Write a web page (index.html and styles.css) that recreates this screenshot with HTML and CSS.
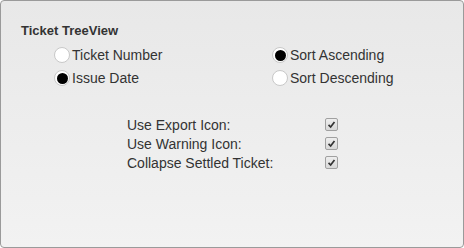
FILE: index.html
```html
<!DOCTYPE html>
<html lang="en">
<head>
  <meta charset="UTF-8" />
  <title>Ticket TreeView</title>
  <link rel="stylesheet" href="styles.css">
</head>
<body>
  <div class="panel">
    <h2 class="panel-title">Ticket TreeView</h2>

    <div class="radio-grid">
      <label class="radio"><span class="dot"></span>Ticket Number</label>
      <label class="radio"><span class="dot on"></span>Sort Ascending</label>
      <label class="radio"><span class="dot on"></span>Issue Date</label>
      <label class="radio"><span class="dot"></span>Sort Descending</label>
    </div>

    <div class="options">
      <div class="option">
        <span class="option-label">Use Export Icon:</span>
        <span class="check"><svg viewBox="0 0 13 13"><path d="M3 7 L5.5 9.5 L10 3.5" /></svg></span>
      </div>
      <div class="option">
        <span class="option-label">Use Warning Icon:</span>
        <span class="check"><svg viewBox="0 0 13 13"><path d="M3 7 L5.5 9.5 L10 3.5" /></svg></span>
      </div>
      <div class="option">
        <span class="option-label">Collapse Settled Ticket:</span>
        <span class="check"><svg viewBox="0 0 13 13"><path d="M3 7 L5.5 9.5 L10 3.5" /></svg></span>
      </div>
    </div>
  </div>
</body>
</html>
```

FILE: styles.css
```css
html, body {
  margin: 0;
  height: 100%;
}

body {
  font-family: "Liberation Sans", Arial, sans-serif;
  color: #333;
}

.panel {
  box-sizing: border-box;
  height: 248px;
  border: 1px solid #9a9a9a;
  border-radius: 4px;
  background: linear-gradient(#e8e8e8, #f2f2f2);
  padding: 22px 20px 0 20px;
}

.panel-title {
  margin: 0;
  font-size: 13px;
  font-weight: bold;
  line-height: 16px;
}

.radio-grid {
  display: grid;
  grid-template-columns: 218px auto;
  row-gap: 7px;
  margin: 8px 0 0 33px;
}

.radio {
  display: flex;
  align-items: center;
  font-size: 14px;
  line-height: 16px;
}

.dot {
  box-sizing: border-box;
  width: 16px;
  height: 16px;
  border: 1px solid #c8c8c8;
  border-radius: 50%;
  background: #fff;
  margin-right: 2px;
  display: flex;
  align-items: center;
  justify-content: center;
}

.dot.on::after {
  content: "";
  width: 11px;
  height: 11px;
  border-radius: 50%;
  background: #000;
}

.options {
  margin: 29px 0 0 106px;
}

.option {
  display: flex;
  align-items: center;
  height: 19px;
  font-size: 14px;
}

.option-label {
  width: 198px;
}

.check {
  box-sizing: border-box;
  width: 13px;
  height: 13px;
  border: 1px solid #a0a0a0;
  border-radius: 2px;
  background: linear-gradient(#eee, #d8d8d8);
}

.check svg {
  display: block;
  width: 11px;
  height: 11px;
  fill: none;
  stroke: #333;
  stroke-width: 2;
}
```
